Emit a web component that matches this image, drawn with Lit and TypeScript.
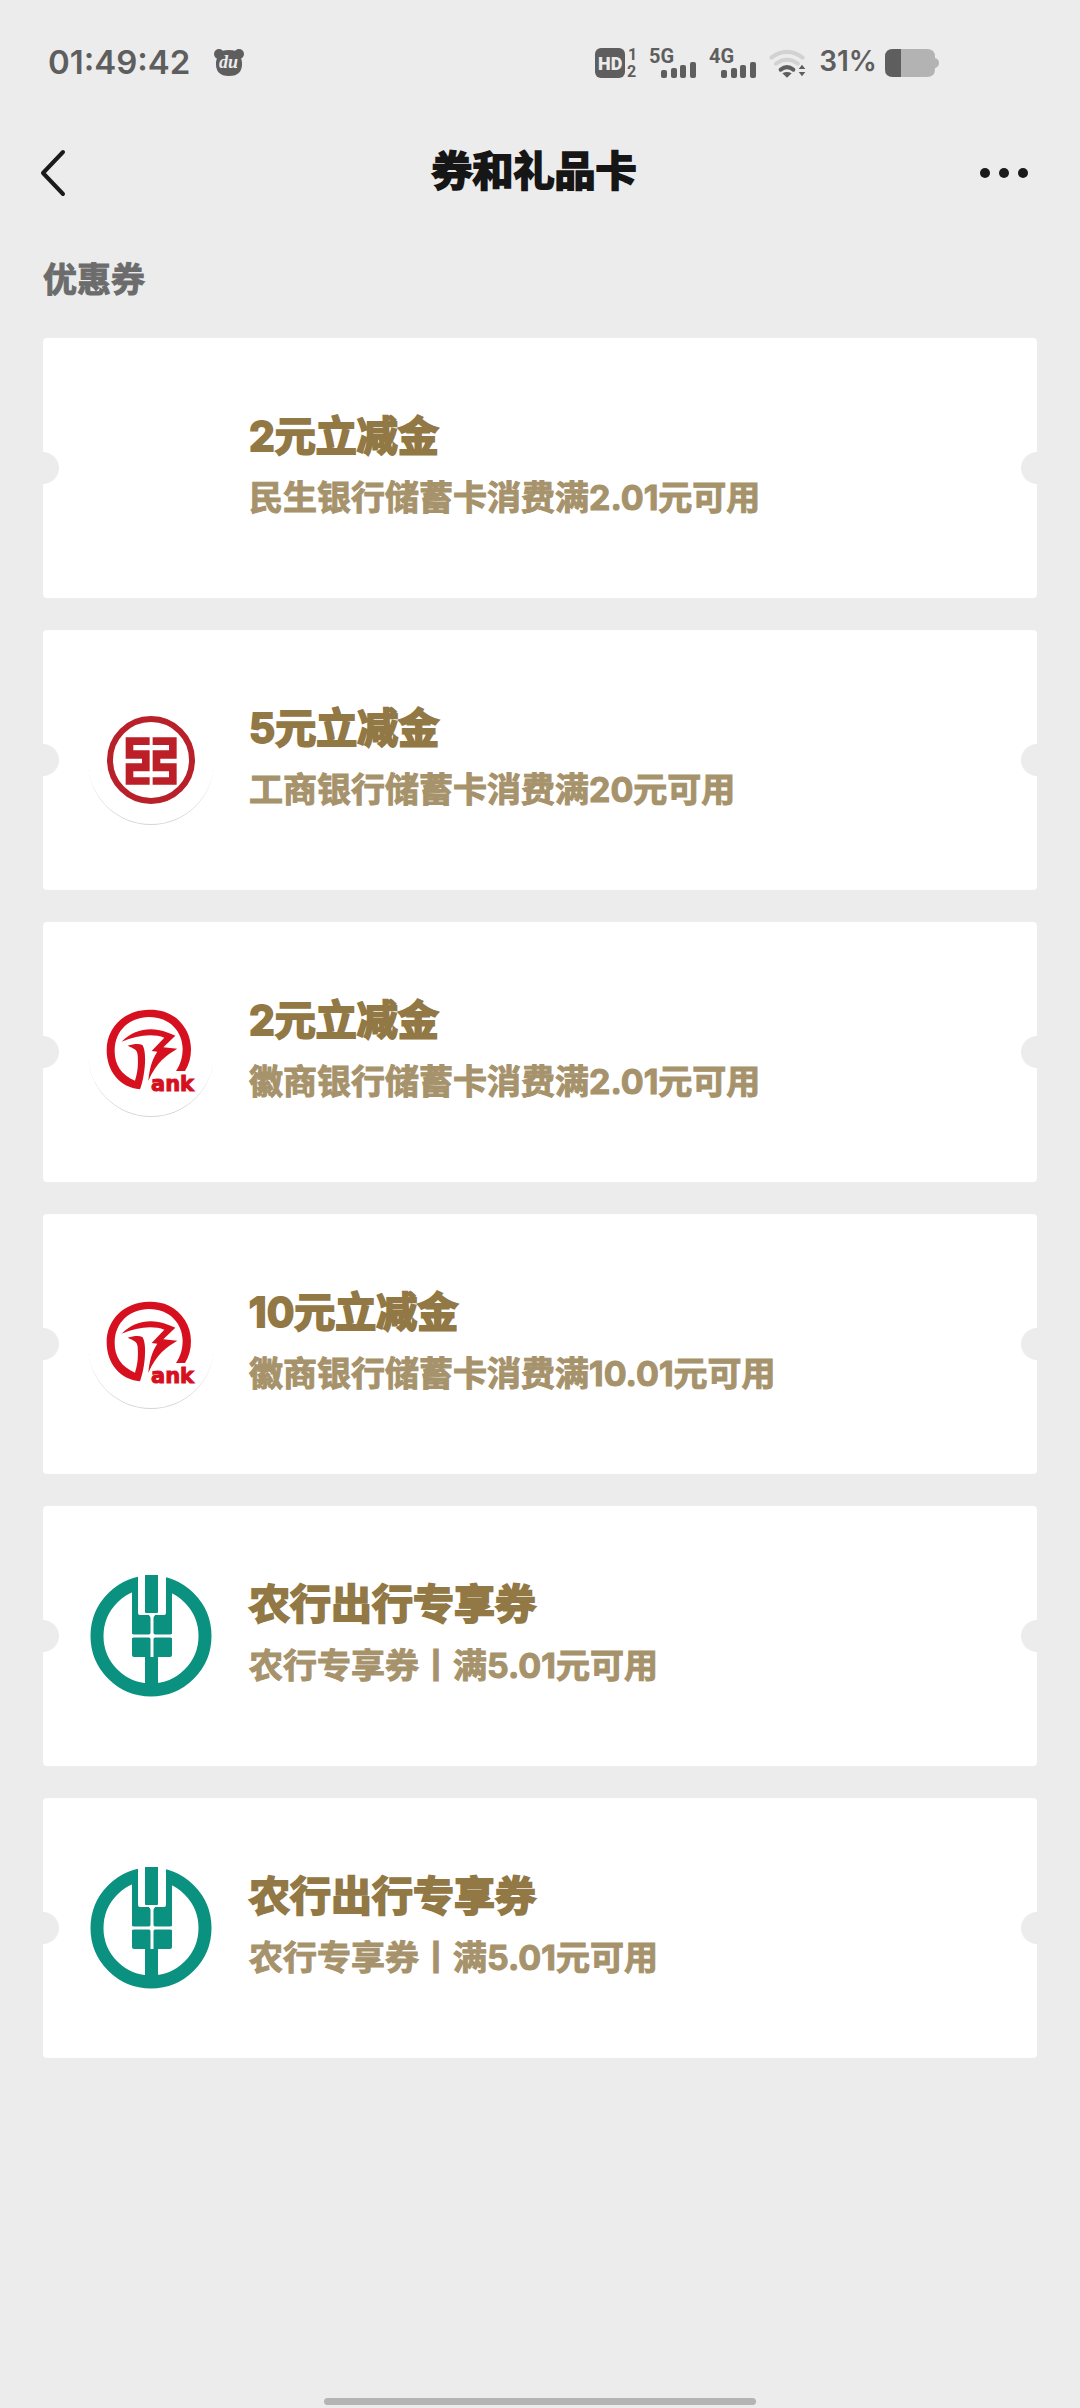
import { LitElement, html, css, svg, nothing } from "lit";
import { customElement, property } from "lit/decorators.js";

type Bank = "none" | "icbc" | "huishang" | "abc";

interface Coupon {
  bank: Bank;
  title: string;
  detail: string;
}

const COUPONS: Coupon[] = [
  { bank: "none", title: "2元立减金", detail: "民生银行储蓄卡消费满2.01元可用" },
  { bank: "icbc", title: "5元立减金", detail: "工商银行储蓄卡消费满20元可用" },
  { bank: "huishang", title: "2元立减金", detail: "徽商银行储蓄卡消费满2.01元可用" },
  { bank: "huishang", title: "10元立减金", detail: "徽商银行储蓄卡消费满10.01元可用" },
  { bank: "abc", title: "农行出行专享券", detail: "农行专享券丨满5.01元可用" },
  { bank: "abc", title: "农行出行专享券", detail: "农行专享券丨满5.01元可用" },
];

// White disc with a thin shade along its lower edge
const disc = svg`
  <circle cx="61" cy="62" r="63" fill="#d4d4d4" />
  <circle cx="61" cy="60.5" r="63.5" fill="#fff" />
`;

const LOGOS = {
  none: nothing,
  icbc: svg`
    ${disc}
    <circle cx="61" cy="60" r="41" fill="none" stroke="#b8202a" stroke-width="6" />
    <g transform="translate(-20 -10) scale(.3333)" fill="#bd1f28">
      <path d="M167 142H239V165H190V181H239V244H190V262H239V284H167V220H216V206H167Z" />
      <path d="M248 142H320V206H271V220H320V284H248V262H297V244H248V181H297V165H248Z" />
    </g>
  `,
  huishang: svg`
    ${disc}
    <g transform="translate(-20 -12) scale(.3333)" fill="#d6101e">
      <path d="M345 273C370 235 368 180 345 145C318 100 275 88 237 89C160 90 110 145 110 210C110 275 150 322 210 328C225 290 232 215 217 195C205 190 190 193 173 197C190 205 202 208 203 225C206 265 200 285 195 302C155 285 133 255 134 210C135 150 180 112 237 111C300 111 337 155 338 205C338 235 330 255 318 273Z" />
      <path d="M155 185C185 155 225 143 265 150C285 154 300 160 316 167L280 202L322 206C290 225 260 245 235 302C238 270 245 240 262 215L245 213L283 173C250 160 200 165 155 185Z" />
    </g>
    <text x="61" y="99" class="ank">ank</text>
  `,
  abc: svg`
    <g transform="translate(1 0)">
      <circle cx="60" cy="60" r="54" fill="none" stroke="#0b917f" stroke-width="13" />
      <path d="M41 12H81V79Q81 81 79 81H67V112H54V81H43Q41 81 41 79Z" fill="#0b917f" />
      <path d="M47 -2H75V37Q75 39 73 39H49Q47 39 47 37Z" fill="#fff" />
      <path d="M54 -1H67V36Q67 37 66 37H55Q54 37 54 36Z" fill="#0b917f" />
      <path d="M61 38V81M40 60H82" stroke="#fff" stroke-width="3" />
      <path d="M57 38H65L61 43ZM57 60L61 56L65 60L61 64ZM40 57L44 60L40 63ZM82 57L78 60L82 63Z" fill="#fff" />
    </g>
  `,
};

@customElement("status-bar")
class StatusBar extends LitElement {
  static styles = css`
    :host {
      display: flex;
      align-items: center;
      justify-content: space-between;
      height: 126px;
      padding: 0 141px 0 48px;
      color: #5e5e5e;
      font-family: Inter, "Noto Sans CJK SC", sans-serif;
      font-weight: 600;
      line-height: 40px;
    }
    .group {
      display: flex;
      align-items: center;
      gap: 12px;
    }
    .left {
      gap: 24px;
    }
    .time {
      font-size: 33px;
      padding-bottom: 2px;
    }
    .battery {
      display: flex;
      align-items: center;
      gap: 8px;
      font-size: 28px;
    }
    .percent {
      padding-bottom: 4px;
    }
    svg {
      display: block;
      fill: currentColor;
      overflow: visible;
    }
    .net {
      font: 700 20px Roboto, sans-serif;
    }
    .hd {
      font: 900 18px Roboto, sans-serif;
      fill: #ececec;
    }
    .sim {
      font: 700 16px Roboto, sans-serif;
    }
    .du {
      font: italic 700 18px "Liberation Serif", serif;
      fill: #ececec;
    }
  `;

  private signal(label: string) {
    return html`
      <svg width="48" height="30" viewBox="0 0 48 30">
        <text x="0" y="15" class="net">${label}</text>
        <rect x="12" y="22" width="6" height="8" rx="2" />
        <rect x="22" y="20" width="6" height="10" rx="2" />
        <rect x="31" y="17" width="6" height="13" rx="2" />
        <rect x="41" y="14" width="6" height="16" rx="2" />
      </svg>
    `;
  }

  render() {
    return html`
      <div class="group left">
        <span class="time">01:49:42</span>
        <svg width="30" height="28" viewBox="0 0 30 28">
          <circle cx="5" cy="5" r="5" />
          <circle cx="25" cy="5" r="5" />
          <path d="M8 2Q15 0 22 2Q27 5 28 13Q29 27 15 27Q1 27 2 13Q3 5 8 2Z" />
          <text x="5" y="19" class="du">du</text>
        </svg>
      </div>
      <div class="group">
        <svg width="42" height="30" viewBox="0 0 42 30">
          <rect width="30" height="30" rx="6" />
          <text x="3" y="22" class="hd">HD</text>
          <text x="33" y="12" class="sim">1</text>
          <text x="32" y="29" class="sim">2</text>
        </svg>
        ${this.signal("5G")} ${this.signal("4G")}
        <svg width="38" height="30" viewBox="573 54 114 90">
          <g fill="none" stroke-width="12" stroke-linecap="round">
            <path d="M580 83Q627 48 674 83M594 101Q627 78 660 101" stroke="#d2d2d2" />
            <path d="M608 119Q627 104 646 119" stroke="#5e5e5e" />
          </g>
          <path d="M613 130Q627 122 641 130L627 143Z" />
          <path d="M672 104L682 117H662ZM672 139L682 126H662Z" />
        </svg>
        <div class="battery">
          <span class="percent">31%</span>
          <svg width="54" height="28" viewBox="0 0 54 28">
            <path d="M8 0H42Q50 0 50 8V9Q54 10 54 14Q54 18 50 19V20Q50 28 42 28H8Q0 28 0 20V8Q0 0 8 0Z" fill="#b3b3b3" />
            <path d="M8 0H16V28H8Q0 28 0 20V8Q0 0 8 0Z" />
          </svg>
        </div>
      </div>
    `;
  }
}

@customElement("coupon-card")
class CouponCard extends LitElement {
  @property({ attribute: false }) coupon!: Coupon;

  static styles = css`
    :host {
      display: block;
    }
    .card {
      position: relative;
      display: flex;
      align-items: center;
      gap: 39px;
      height: 260px;
      padding: 0 47px;
      background: #fff;
      border-radius: 4px;
      overflow: hidden;
      text-decoration: none;
    }
    .card::before,
    .card::after {
      content: "";
      position: absolute;
      top: 50%;
      width: 32px;
      height: 32px;
      margin-top: -16px;
      border-radius: 50%;
      background: #ececec;
    }
    .card::before {
      left: -16px;
    }
    .card::after {
      right: -16px;
    }
    .logo {
      flex: none;
      width: 120px;
      height: 120px;
      overflow: visible;
    }
    .ank {
      font: 700 21px "DejaVu Sans", sans-serif;
      fill: #d6101e;
      stroke: #d6101e;
      stroke-width: 1px;
    }
    .title {
      margin: 0;
      color: #917844;
      font-size: 41px;
      font-weight: 700;
      line-height: 60px;
      -webkit-text-stroke: 2px currentColor;
    }
    .detail {
      margin: 0;
      color: #a6926b;
      font-size: 34px;
      font-weight: 700;
      line-height: 64px;
      -webkit-text-stroke: 1px currentColor;
    }
  `;

  render() {
    const { bank, title, detail } = this.coupon;
    return html`
      <a class="card" href="#">
        <svg class="logo" viewBox="0 0 120 120" aria-hidden="true">${LOGOS[bank]}</svg>
        <div>
          <h3 class="title">${title}</h3>
          <p class="detail">${detail}</p>
        </div>
      </a>
    `;
  }
}

@customElement("app-root")
class AppRoot extends LitElement {
  static styles = css`
    :host {
      display: flex;
      flex-direction: column;
      min-height: 100vh;
      background: #ececec;
      font-family: Inter, "Noto Sans CJK SC", sans-serif;
    }
    .header {
      display: grid;
      grid-template-columns: 1fr auto 1fr;
      align-items: center;
      height: 94px;
      padding: 0 52px 0 40px;
    }
    .heading {
      margin: 0;
      color: #161616;
      font-size: 41px;
      font-weight: 700;
      line-height: 60px;
      padding-bottom: 4px;
      -webkit-text-stroke: 2px currentColor;
    }
    .icon {
      padding: 0;
      border: 0;
      background: none;
      color: #1a1a1a;
    }
    .icon svg {
      display: block;
    }
    .more {
      justify-self: end;
    }
    .back {
      justify-self: start;
    }
    .main {
      flex: 1;
      padding: 30px 43px;
    }
    .section {
      margin: 0 0 28px;
      color: #6c6c6c;
      font-size: 34px;
      font-weight: 700;
      line-height: 60px;
      -webkit-text-stroke: 1px currentColor;
    }
    .list {
      display: grid;
      gap: 32px;
      margin: 0;
      padding: 0;
      list-style: none;
    }
    .home {
      width: 40%;
      height: 7px;
      margin: 0 auto 3px;
      border-radius: 4px;
      background: #b4b4b4;
    }
  `;

  render() {
    return html`
      <status-bar></status-bar>
      <header class="header">
        <button class="icon back" aria-label="返回">
          <svg width="28" height="48" viewBox="0 0 28 48">
            <path d="M23 3L3 24L23 45" fill="none" stroke="currentColor" stroke-width="4" stroke-linecap="round" stroke-linejoin="round" />
          </svg>
        </button>
        <h1 class="heading">券和礼品卡</h1>
        <button class="icon more" aria-label="更多">
          <svg width="50" height="48" viewBox="0 0 50 48" fill="currentColor">
            <circle cx="7" cy="24" r="5" />
            <circle cx="26" cy="24" r="5" />
            <circle cx="45" cy="24" r="5" />
          </svg>
        </button>
      </header>
      <main class="main">
        <h2 class="section">优惠券</h2>
        <ul class="list">
          ${COUPONS.map((c) => html`<li><coupon-card .coupon=${c}></coupon-card></li>`)}
        </ul>
      </main>
      <div class="home"></div>
    `;
  }
}
